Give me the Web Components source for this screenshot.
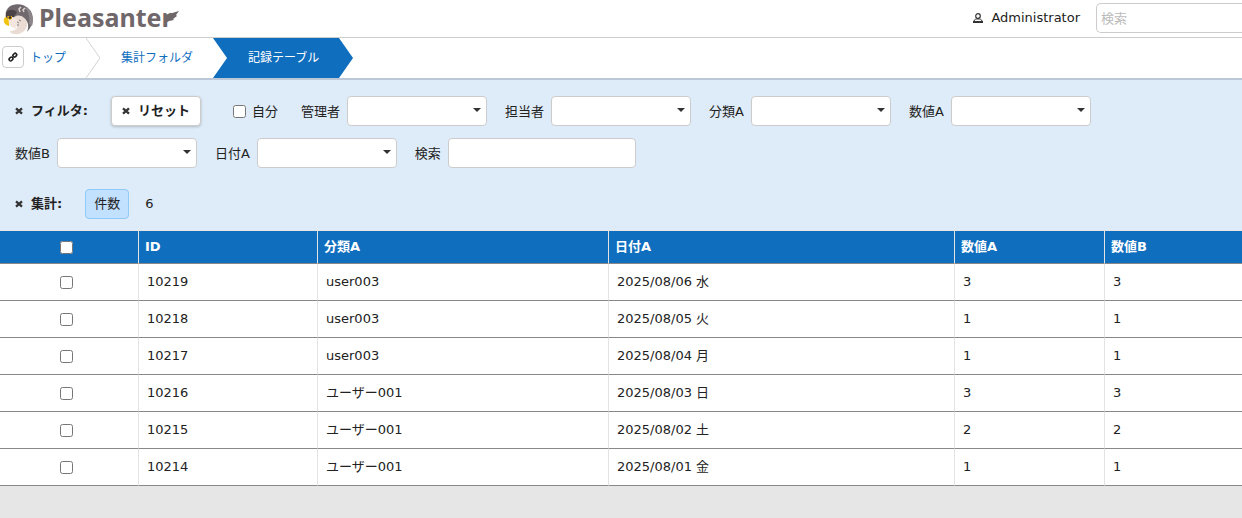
<!DOCTYPE html>
<html lang="ja">
<head>
<meta charset="utf-8">
<meta name="viewport" content="width=device-width, initial-scale=1">
<title>記録テーブル - Pleasanter</title>
<style>
  html { background: #e6e6e6; }
  body {
    margin: 0;
    color: #222;
    font: 13px/20px "DejaVu Sans", "Noto Sans CJK JP", sans-serif;
  }
</style>
</head>
<body>
<app-header user="Administrator"></app-header>
<bread-crumbs>
  <bread-crumb>トップ</bread-crumb>
  <bread-crumb before-current>集計フォルダ</bread-crumb>
  <bread-crumb current>記録テーブル</bread-crumb>
</bread-crumbs>
<filter-panel>
  <panel-title>フィルタ:</panel-title>
  <reset-button>リセット</reset-button>
  <filter-check>自分</filter-check>
  <filter-field kind="select">管理者</filter-field>
  <filter-field kind="select">担当者</filter-field>
  <filter-field kind="select">分類A</filter-field>
  <filter-field kind="select">数値A</filter-field>
  <filter-field kind="select">数値B</filter-field>
  <filter-field kind="select">日付A</filter-field>
  <filter-field kind="text">検索</filter-field>
</filter-panel>
<aggregation-panel>
  <panel-title>集計:</panel-title>
  <count-badge value="6">件数</count-badge>
</aggregation-panel>
<record-grid></record-grid>

<script>
const CLOSE = `<svg width="8" height="8" viewBox="0 0 8 8" aria-hidden="true"><path d="M1 1.300L7 6.700M7 1.300L1 6.700" stroke="#333" stroke-width="2.300"/></svg>`;

function define(name, render) {
  customElements.define(name, class extends HTMLElement {
    connectedCallback() {
      if (this.shadowRoot) return;
      const t = document.createElement('template');
      t.innerHTML = render(this);
      this.attachShadow({ mode: 'open' }).append(t.content.cloneNode(true));
    }
  });
}

define('brand-logo', () => `
  <style>
    :host { display: block; }
    a { display: flex; align-items: center; color: #70676a; text-decoration: none; }
    .bird { width: 32px; height: 32px; margin-right: 5px; }
    span { font: bold 25px/32px "Noto Sans", sans-serif; padding-bottom: 4px; }
    .feather { width: 14px; height: 12px; margin: 0 0 4px -8px; }
  </style>
  <a href="#" aria-label="Pleasanter">
    <svg class="bird" viewBox="0 0 32 32">
      <path d="M7 4C12 0 22 0 28 7C33 14 31 23 25 29C28 21 25 16 19 14L4 16C3 10 4 7 7 4Z" fill="#6f686d"/>
      <path d="M25 4C31 10 32 18 30 23L27 21C28 14 27 9 23 5Z" fill="#8c858a"/>
      <path d="M4 10C6 6 11 6 15 9L12 14L4 14Z" fill="#4b4248"/>
      <path d="M12 14C17 10 24 14 25 20C26 27 19 32 13 31C10 31 8 30 8 28C15 28 16 24 14 21Z" fill="#eadbd4"/>
      <path d="M7 15C12 12 15 16 16 20L13 26L7 22Z" fill="#f3e6df"/>
      <path d="M3 14C7 15 7 18 7 23C3 22 1 19 2 16Z" fill="#f1c40f"/>
      <path d="M5 13L10 13L10 16L7 17Z" fill="#d9a514"/>
      <circle cx="8" cy="14.500" r="1.200" fill="#2b2529"/>
      <path d="M19 4L17 6L18 9M23 5L21 7L22 9" fill="none" stroke="#ded5d3" stroke-width="1.500"/>
      <path d="M15 19L17 20M17 17L19 18M15 22L17 22" stroke="#8e8182"/>
    </svg>
    <span>Pleasanter</span>
    <svg class="feather" viewBox="0 0 14 12"><path d="M0 4C3 3 8 2 14 0L11 4L12 5L8 8L9 9L4 10L1 12Z" fill="#70676a"/></svg>
  </a>`);

define('app-header', el => `
  <style>
    :host { display: flex; align-items: center; height: 37px; background: #fff; border-bottom: 1px solid #ccc; }
    brand-logo { margin: 0 auto 0 2px; }
    .user { display: flex; align-items: center; gap: 8px; color: #222; text-decoration: none; margin: 0 16px 2px 0; }
    input { box-sizing: border-box; width: 146px; height: 30px; margin: 0 0 1px; padding: 0 4px; font: inherit;
      border: 1px solid #ccc; border-right: 0; border-radius: 5px 0 0 5px; outline: 0; background: #fff; }
    input::placeholder { color: #bbb; opacity: 1; }
  </style>
  <brand-logo></brand-logo>
  <a class="user" href="#">
    <svg width="10" height="10" viewBox="0 0 10 10" aria-hidden="true"><circle cx="5" cy="3" r="2.300" fill="none" stroke="#333" stroke-width="1.200"/><path d="M1 8.500C1 6 3 6 5 6S9 6 9 8.500" fill="none" stroke="#333"/><path d="M0 9H10" stroke="#333" stroke-width="2"/></svg>
    <span>${el.getAttribute('user')}</span>
  </a>
  <input type="search" placeholder="検索" aria-label="検索">`);

define('bread-crumbs', () => `
  <style>
    :host { display: flex; align-items: center; height: 40px; padding-left: 2px; background: #fff; border-bottom: 2px solid #bcc8d8; }
    button { display: grid; place-items: center; width: 22px; height: 22px; margin: 0 6px 2px 0; padding: 0; background: #fff; border: 1px solid #ccc; border-radius: 4px; }
    nav { display: flex; }
  </style>
  <button type="button" aria-label="リンク">
    <svg width="10" height="10" viewBox="0 0 10 10" fill="none" stroke="#222" stroke-width="1.600"><rect x="1" y="5.500" width="4" height="3" rx="1.400" transform="rotate(-45 3 7)"/><rect x="4.800" y="1.700" width="4" height="3" rx="1.400" transform="rotate(-45 6.800 3.200)"/></svg>
  </button>
  <nav><slot></slot></nav>`);

define('bread-crumb', el => {
  const tip = el.hasAttribute('current')
    ? '<path d="M0 0L14 20L0 40Z" fill="#106ebe"/>'
    : el.hasAttribute('before-current')
      ? '<path d="M0 0H14V40H0L14 20Z" fill="#106ebe"/>'
      : '<path d="M0 0L14 20L0 40" fill="none" stroke="#d3d3d3"/>';
  return `
  <style>
    :host { display: flex; height: 40px; font-size: 12px; line-height: 40px; }
    a { color: #106ebe; text-decoration: none; padding: 0 20px 0 21px; }
    :host(:first-child) a { padding-left: 0; }
    :host([current]) a { background: #106ebe; color: #fff; }
    svg { flex: none; }
  </style>
  <a href="#"><slot></slot></a><svg width="14" height="40" viewBox="0 0 14 40" aria-hidden="true">${tip}</svg>`;
});

define('panel-title', () => `
  <style>
    :host { display: flex; align-items: center; gap: 8px; height: 30px; font-weight: bold; }
  </style>
  ${CLOSE}<span><slot></slot></span>`);

define('reset-button', () => `
  <style>
    :host { display: block; margin: 0 14px 0 5px; }
    button { display: flex; align-items: center; gap: 8px; height: 30px; margin: 0; padding: 0 10px; font: inherit; font-weight: bold;
      color: #222; background: #fff; border: 1px solid #ccc; border-radius: 4px; box-shadow: 0 1px 3px #0003; }
  </style>
  <button type="button">${CLOSE}<span><slot></slot></span></button>`);

define('filter-check', () => `
  <style>
    :host { display: block; margin-right: 5px; }
    label { display: flex; align-items: center; gap: 6px; height: 30px; }
    input { width: 13px; height: 13px; margin: 0; }
    span { padding-top: 2px; }
  </style>
  <label><input type="checkbox"><span><slot></slot></span></label>`);

define('filter-field', el => `
  <style>
    :host { display: block; }
    label { display: flex; align-items: center; gap: 7px; }
    span { padding-top: 2px; }
    select, input { box-sizing: border-box; height: 30px; margin: 0; padding: 0 8px; font: inherit; color: inherit;
      background: #fff; border: 1px solid #ccc; border-radius: 4px; }
    input { width: 188px; }
    select { appearance: none; width: 140px;
      background: #fff url("data:image/svg+xml,%3Csvg xmlns='http://www.w3.org/2000/svg' width='8' height='4'%3E%3Cpath d='M0 0H8L4 4Z' fill='%23333'/%3E%3C/svg%3E") no-repeat right 5px top 11px; }
  </style>
  <label><span><slot></slot></span>${el.getAttribute('kind') === 'select' ? '<select><option></option></select>' : '<input type="text">'}</label>`);

define('filter-panel', () => `
  <style>
    :host { display: flex; flex-wrap: wrap; align-items: center; gap: 12px 18px; padding: 16px 15px 12px; background: #deebf8; }
  </style>
  <slot></slot>`);

define('aggregation-panel', () => `
  <style>
    :host { display: flex; align-items: center; gap: 23px; padding: 9px 15px 11px; background: #deebf8; border-bottom: 1px solid #e6e6e6; }
  </style>
  <slot></slot>`);

define('count-badge', el => `
  <style>
    :host { display: flex; align-items: center; gap: 16px; }
    .name { box-sizing: border-box; height: 30px; line-height: 28px; padding: 0 8px; background: #c2e0ff; border: 1px solid #91c9f7; border-radius: 4px; }
  </style>
  <span class="name"><slot></slot></span><span>${el.getAttribute('value')}</span>`);

const RECORDS = [
  ['10219', 'user003', '2025/08/06 水', 3, 3],
  ['10218', 'user003', '2025/08/05 火', 1, 1],
  ['10217', 'user003', '2025/08/04 月', 1, 1],
  ['10216', 'ユーザー001', '2025/08/03 日', 3, 3],
  ['10215', 'ユーザー001', '2025/08/02 土', 2, 2],
  ['10214', 'ユーザー001', '2025/08/01 金', 1, 1],
];

define('record-grid', () => `
  <style>
    :host { display: block; }
    table { width: 100%; table-layout: fixed; border-collapse: separate; border-spacing: 0; background: #fff; }
    .check { width: 139px; } .id { width: 179px; } .class { width: 291px; } .date { width: 346px; } .num { width: 150px; }
    th, td { box-sizing: border-box; text-align: left; border-bottom: 1px solid #888; border-right: 1px solid #e3e3e3; }
    th { height: 33px; padding: 0 6px; color: #fff; background: #106ebe; font-weight: bold; }
    td { height: 37px; padding: 0 8px; }
    th:last-child, td:last-child { border-right: 0; }
    th:first-child, td:first-child { text-align: center; padding: 0 6px 0 0; }
    input { display: block; width: 13px; height: 13px; margin: 0 auto; }
  </style>
  <table>
    <colgroup><col class="check"><col class="id"><col class="class"><col class="date"><col class="num"><col></colgroup>
    <thead><tr><th><input type="checkbox" aria-label="すべて選択"></th><th>ID</th><th>分類A</th><th>日付A</th><th>数値A</th><th>数値B</th></tr></thead>
    <tbody>${RECORDS.map(r => `<tr><td><input type="checkbox" aria-label="${r[0]}"></td>${r.map(c => `<td>${c}</td>`).join('')}</tr>`).join('')}</tbody>
  </table>`);
</script>
</body>
</html>
